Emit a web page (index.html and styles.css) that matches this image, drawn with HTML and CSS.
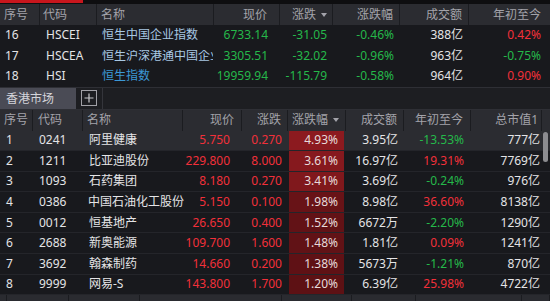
FILE: index.html
```html
<!DOCTYPE html>
<html lang="zh">
<head>
<meta charset="utf-8">
<link rel="stylesheet" href="styles.css">
</head>
<body>
<div class="topstrip"><div class="redbar"></div></div>

<div class="tbl idx">
  <div class="row head">
    <div class="c l1">序号</div>
    <div class="c l2">代码</div>
    <div class="c l3">名称</div>
    <div class="c r">现价</div>
    <div class="c r sort">涨跌<span class="arrow"></span></div>
    <div class="c r">涨跌幅</div>
    <div class="c r">成交额</div>
    <div class="c r last">年初至今</div>
  </div>
  <div class="row">
    <div class="c l1 w">16</div>
    <div class="c l2 w">HSCEI</div>
    <div class="c l3 nm">恒生中国企业指数</div>
    <div class="c r g">6733.14</div>
    <div class="c r g">-31.05</div>
    <div class="c r g">-0.46%</div>
    <div class="c r w">388亿</div>
    <div class="c r last red">0.42%</div>
  </div>
  <div class="row">
    <div class="c l1 w">17</div>
    <div class="c l2 w">HSCEA</div>
    <div class="c l3 nm"><span class="clip">恒生沪深港通中国企业指数</span></div>
    <div class="c r g">3305.51</div>
    <div class="c r g">-32.02</div>
    <div class="c r g">-0.96%</div>
    <div class="c r w">963亿</div>
    <div class="c r last g">-0.75%</div>
  </div>
  <div class="row">
    <div class="c l1 w">18</div>
    <div class="c l2 w">HSI</div>
    <div class="c l3 nm sel">恒生指数</div>
    <div class="c r g">19959.94</div>
    <div class="c r g">-115.79</div>
    <div class="c r g">-0.58%</div>
    <div class="c r w">964亿</div>
    <div class="c r last red">0.90%</div>
  </div>
</div>

<div class="tabbar">
  <div class="tab">香港市场</div>
  <div class="plus">
    <svg width="16" height="16" viewBox="0 0 16 16"><rect x="0.5" y="0.5" width="15" height="15" fill="none" stroke="#a0a0a6" stroke-width="1"/><path d="M8 3.5v9M3.5 8h9" stroke="#c8c8cc" stroke-width="1.2"/></svg>
  </div>
  <div class="tabrest"></div>
</div>

<div class="tbl mkt">
  <div class="row head">
    <div class="c m1">序号</div>
    <div class="c m2">代码</div>
    <div class="c m3">名称</div>
    <div class="c r pr7">现价</div>
    <div class="c r">涨跌</div>
    <div class="c r sort">涨跌幅<span class="arrow"></span></div>
    <div class="c r">成交额</div>
    <div class="c r pr7">年初至今</div>
    <div class="c r pr3">总市值1</div>
    <div class="c sb"></div>
  </div>
  <div class="row hi">
    <div class="c m1 w">1</div><div class="c m2 w">0241</div><div class="c m3 w">阿里健康</div>
    <div class="c r pr12 red">5.750</div><div class="c r red">0.270</div>
    <div class="c pct"><span class="bar" style="background:#8c1a1f">4.93%</span></div>
    <div class="c r w">3.95亿</div><div class="c r pr7 g">-13.53%</div><div class="c r pr2 w">777亿</div><div class="c sb"></div>
  </div>
  <div class="row">
    <div class="c m1 w">2</div><div class="c m2 w">1211</div><div class="c m3 w">比亚迪股份</div>
    <div class="c r pr12 red">229.800</div><div class="c r red">8.000</div>
    <div class="c pct"><span class="bar" style="background:#86191e">3.61%</span></div>
    <div class="c r w">16.97亿</div><div class="c r pr7 red">19.31%</div><div class="c r pr2 w">7769亿</div><div class="c sb"></div>
  </div>
  <div class="row">
    <div class="c m1 w">3</div><div class="c m2 w">1093</div><div class="c m3 w">石药集团</div>
    <div class="c r pr12 red">8.180</div><div class="c r red">0.270</div>
    <div class="c pct"><span class="bar" style="background:#80181c">3.41%</span></div>
    <div class="c r w">3.69亿</div><div class="c r pr7 g">-0.24%</div><div class="c r pr2 w">976亿</div><div class="c sb"></div>
  </div>
  <div class="row">
    <div class="c m1 w">4</div><div class="c m2 w">0386</div><div class="c m3 w wide">中国石油化工股份</div>
    <div class="c r pr12 red">5.150</div><div class="c r red">0.100</div>
    <div class="c pct"><span class="bar" style="background:#681317">1.98%</span></div>
    <div class="c r w">8.98亿</div><div class="c r pr7 red">36.60%</div><div class="c r pr2 w">8138亿</div><div class="c sb"></div>
  </div>
  <div class="row">
    <div class="c m1 w">5</div><div class="c m2 w">0012</div><div class="c m3 w">恒基地产</div>
    <div class="c r pr12 red">26.650</div><div class="c r red">0.400</div>
    <div class="c pct"><span class="bar" style="background:#621216">1.52%</span></div>
    <div class="c r w">6672万</div><div class="c r pr7 g">-2.20%</div><div class="c r pr2 w">1290亿</div><div class="c sb"></div>
  </div>
  <div class="row">
    <div class="c m1 w">6</div><div class="c m2 w">2688</div><div class="c m3 w">新奥能源</div>
    <div class="c r pr12 red">109.700</div><div class="c r red">1.600</div>
    <div class="c pct"><span class="bar" style="background:#611216">1.48%</span></div>
    <div class="c r w">1.81亿</div><div class="c r pr7 red">0.09%</div><div class="c r pr2 w">1241亿</div><div class="c sb"></div>
  </div>
  <div class="row">
    <div class="c m1 w">7</div><div class="c m2 w">3692</div><div class="c m3 w">翰森制药</div>
    <div class="c r pr12 red">14.660</div><div class="c r red">0.200</div>
    <div class="c pct"><span class="bar" style="background:#5f1115">1.38%</span></div>
    <div class="c r w">5673万</div><div class="c r pr7 g">-1.21%</div><div class="c r pr2 w">870亿</div><div class="c sb"></div>
  </div>
  <div class="row">
    <div class="c m1 w">8</div><div class="c m2 w">9999</div><div class="c m3 w">网易-S</div>
    <div class="c r pr12 red">143.800</div><div class="c r red">1.700</div>
    <div class="c pct"><span class="bar" style="background:#5d1114">1.20%</span></div>
    <div class="c r w">6.39亿</div><div class="c r pr7 red">25.98%</div><div class="c r pr2 w">4722亿</div><div class="c sb"></div>
  </div>
  <div class="thumb"></div>
</div>

<div class="footer">
  <div></div><div></div><div></div><div></div><div></div><div></div><div></div><div></div>
</div>
</body>
</html>
```

FILE: styles.css
```css
html, body {
  margin: 0;
  padding: 0;
  width: 550px;
  height: 301px;
  overflow: hidden;
  background: #18191d;
  font-family: "Noto Sans", "Noto Sans CJK SC", sans-serif;
  font-size: 12px;
  color: #e2e2e4;
}

.topstrip {
  height: 4px;
  background: #0e0e10;
}
.redbar {
  width: 83px;
  height: 3px;
  background: #c8161d;
}

.tbl { position: relative; }

.row {
  display: grid;
  align-items: stretch;
  height: 20.5px;
  box-sizing: border-box;
}
.idx .row {
  grid-template-columns: 40px 57px 117px 66px 53px 67px 69px 81px;
}
.mkt .row {
  grid-template-columns: 33px 50px 100px 59px 46px 58px 58px 67px 71px 8px;
  height: 20.6px;
  border-bottom: 1px solid #24252a;
}
.mkt .row.hi { background: #2b2c31; }

.c {
  display: flex;
  align-items: center;
  white-space: nowrap;
  overflow: hidden;
  line-height: 1;
  box-sizing: border-box;
}
.r { justify-content: flex-end; padding-right: 6px; }

.clip {
  display: block;
  width: 111px;
  overflow: hidden;
  white-space: nowrap;
}

.head {
  background: #2b2c31;
  color: #a3a3aa;
  height: 21px;
}
.idx .head { height: 21px; }
.mkt .head { height: 21px; border-bottom: 0; }
.head .c { border-right: 1px solid #1b1c20; }
.head .c.last, .head .c.sb { border-right: 0; }

.idx .l1 { padding-left: 5px; }
.idx .l2 { padding-left: 6px; }
.idx .l3 { padding-left: 5px; }
.idx .head .l1 { padding-left: 4px; }
.idx .head .l2 { padding-left: 3px; }
.idx .head .l3 { padding-left: 4px; }
.idx .row > .c:nth-child(4) { padding-right: 12px; }
.idx .last { padding-right: 9px; }
.idx .head .sort { padding-right: 5px; }

.mkt .m1 { padding-left: 6px; }
.mkt .m2 { padding-left: 6px; }
.mkt .m3 { padding-left: 6px; }
.mkt .m3.wide { padding-left: 5px; overflow: visible; }
.mkt .head .m1 { padding-left: 4px; }
.mkt .head .m2 { padding-left: 5px; }
.mkt .head .m3 { padding-left: 4px; }
.pr12 { padding-right: 12px; }
.pr7 { padding-right: 7px; }
.pr3 { padding-right: 3px; }
.pr2 { padding-right: 2px; }

.arrow {
  display: inline-block;
  width: 0;
  height: 0;
  border-left: 3.5px solid transparent;
  border-right: 3.5px solid transparent;
  border-top: 4px solid #a3a3aa;
  margin-left: 5px;
}

.pct { padding: 0 2px 0 1px; }
.bar {
  flex: 1;
  align-self: stretch;
  display: flex;
  align-items: center;
  justify-content: flex-end;
  padding-right: 6px;
  color: #e6dada;
}

.w { color: #e4e4e6; }
.g { color: #25b84a; }
.red { color: #f2303a; }
.nm { color: #a8c8e4; }
.nm.sel { color: #3c98d6; }

.tabbar {
  display: flex;
  height: 23px;
  background: #1d1e22;
  border-top: 1px solid #2e2f35;
  border-bottom: 1px solid #2e2f35;
  box-sizing: border-box;
}
.tab {
  width: 76px;
  background: #4a4b55;
  color: #d4d4da;
  display: flex;
  align-items: center;
  padding-left: 6px;
  box-sizing: border-box;
}
.plus {
  width: 27px;
  display: flex;
  align-items: center;
  justify-content: center;
  border-right: 1px solid #34353b;
  box-sizing: border-box;
}
.plus svg { display: block; }
.tabrest { flex: 1; }

.thumb {
  position: absolute;
  left: 543px;
  top: 22px;
  width: 5px;
  height: 30px;
  border-radius: 3px;
  background: #8c8c90;
}

.footer {
  display: grid;
  grid-template-columns: 7px 62px 71px 142px 70px 64px 106px 28px;
  height: 6px;
  background: #2a2b30;
}
.footer div { border-right: 1px solid #1b1c20; }
```
